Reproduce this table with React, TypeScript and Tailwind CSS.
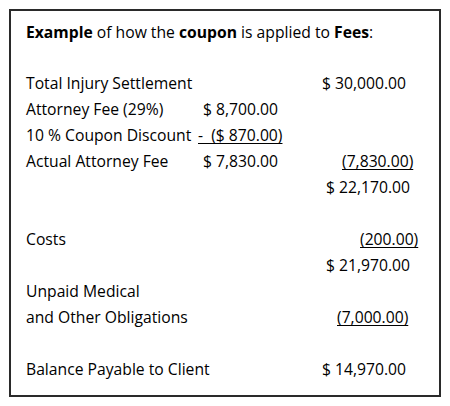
const rows: { label?: string; mid?: string; right?: string; under?: 'mid' | 'right'; rightPad?: string }[] = [
  { label: 'Total Injury Settlement', right: '$ 30,000.00', rightPad: 'ml-[0px]' },
  { label: 'Attorney Fee (29%)', mid: '$ 8,700.00' },
  { label: '10 % Coupon Discount', mid: '-  ($ 870.00)', under: 'mid' },
  { label: 'Actual Attorney Fee', mid: '$ 7,830.00', right: '(7,830.00)', under: 'right', rightPad: 'ml-[20px]' },
  { right: '$ 22,170.00', rightPad: 'ml-[4px]' },
  {},
  { label: 'Costs', right: '(200.00)', under: 'right', rightPad: 'ml-[38px]' },
  { right: '$ 21,970.00', rightPad: 'ml-[4px]' },
  { label: 'Unpaid Medical' },
  { label: 'and Other Obligations', right: '(7,000.00)', under: 'right', rightPad: 'ml-[15px]' },
  {},
  { label: 'Balance Payable to Client', right: '$ 14,970.00', rightPad: 'ml-[0px]' },
];

export default function App() {
  return (
    <div className="w-[450px] h-[406px] bg-white p-[9px]">
      <div
        className="h-[388px] border-2 border-[#2a2a2a] pl-[15px] pt-[8px] text-black text-[15.7px] leading-[26px]"
        style={{ fontFamily: '"Open Sans", "Noto Sans", sans-serif' }}
      >
        <p>
          <span className="font-bold">Example</span> of how the <span className="font-bold">coupon</span> is applied to{' '}
          <span className="font-bold">Fees</span>:
        </p>
        <div className="h-[25px]" />
        {rows.map((r, i) => (
          <div key={i} className="flex h-[26px] whitespace-pre">
            <div className="w-[177px]">{r.label}</div>
            <div className="w-[119px]">
              {r.mid && (
                <span
                  className={r.under === 'mid' ? '-ml-[5px] underline underline-offset-2 decoration-1' : ''}
                >
                  {r.mid}
                </span>
              )}
            </div>
            <div>
              {r.right && (
                <span className={`${r.rightPad} ${r.under === 'right' ? 'underline underline-offset-2 decoration-1' : ''}`}>
                  {r.right}
                </span>
              )}
            </div>
          </div>
        ))}
      </div>
    </div>
  );
}
